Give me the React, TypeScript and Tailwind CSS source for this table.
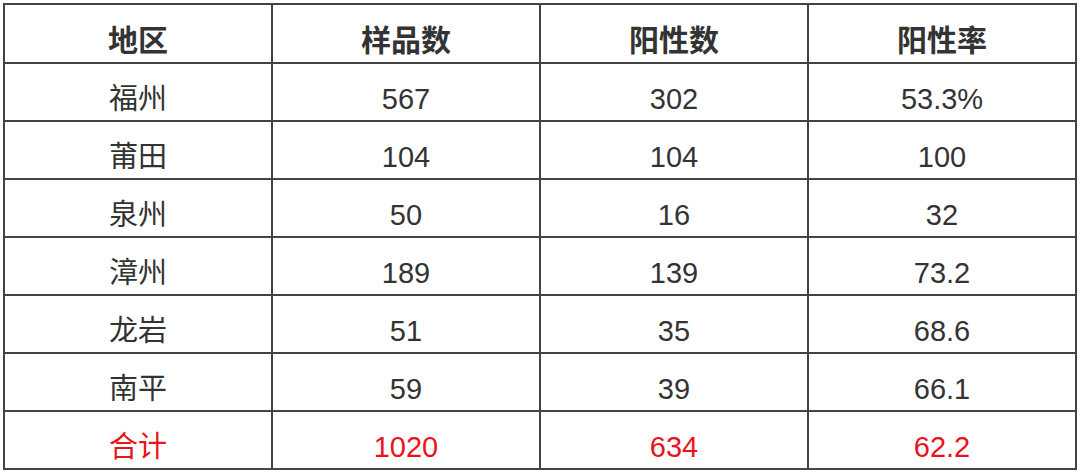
import React from 'react';

const rows = [
  { region: '福州', samples: '567', positive: '302', rate: '53.3%' },
  { region: '莆田', samples: '104', positive: '104', rate: '100' },
  { region: '泉州', samples: '50', positive: '16', rate: '32' },
  { region: '漳州', samples: '189', positive: '139', rate: '73.2' },
  { region: '龙岩', samples: '51', positive: '35', rate: '68.6' },
  { region: '南平', samples: '59', positive: '39', rate: '66.1' },
];

const font = "font-['Liberation_Sans','Noto_Sans_CJK_SC',sans-serif]";

export default function App() {
  return (
    <div className={`w-[1080px] h-[472px] bg-white pl-[3px] pt-[3px] ${font}`}>
      <table className="w-[1074px] border-collapse border-2 border-[#444] text-center text-[#333] table-fixed">
        <thead>
          <tr className="h-[59px]">
            {['地区', '样品数', '阳性数', '阳性率'].map((h) => (
              <th key={h} className="border-2 border-[#444] pt-[15px] text-[30px] font-bold leading-none">
                {h}
              </th>
            ))}
          </tr>
        </thead>
        <tbody>
          {rows.map((r) => (
            <tr key={r.region} className="h-[58px]">
              <td className="border-2 border-[#444] pt-[14px] text-[29px] leading-none">{r.region}</td>
              <td className="border-2 border-[#444] pt-[14px] text-[29px] leading-none">{r.samples}</td>
              <td className="border-2 border-[#444] pt-[14px] text-[29px] leading-none">{r.positive}</td>
              <td className="border-2 border-[#444] pt-[14px] text-[29px] leading-none">{r.rate}</td>
            </tr>
          ))}
          <tr className="h-[58px] text-[#e8141c]">
            <td className="border-2 border-[#444] pt-[14px] text-[29px] leading-none">合计</td>
            <td className="border-2 border-[#444] pt-[14px] text-[29px] leading-none">1020</td>
            <td className="border-2 border-[#444] pt-[14px] text-[29px] leading-none">634</td>
            <td className="border-2 border-[#444] pt-[14px] text-[29px] leading-none">62.2</td>
          </tr>
        </tbody>
      </table>
    </div>
  );
}
